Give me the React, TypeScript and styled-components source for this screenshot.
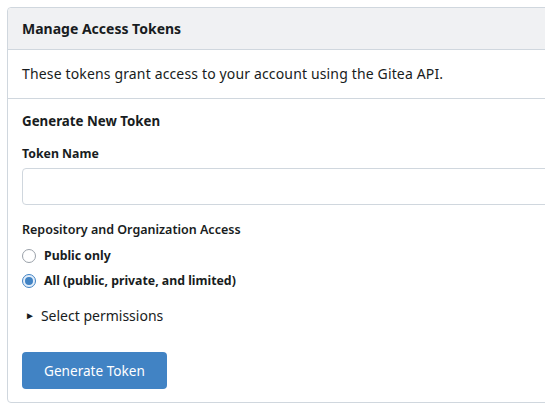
import React from 'react'
import styled, { createGlobalStyle } from 'styled-components'

const GlobalStyle = createGlobalStyle`
  html, body {
    margin: 0;
    padding: 0;
    background: #fff;
    overflow: hidden;
  }
  body {
    font-family: "Noto Sans", "Open Sans", sans-serif;
    color: #181c21;
    font-size: 14px;
  }
`

const Page = styled.div`
  padding: 7px 0 0 7px;
  width: 600px;
`

const Panel = styled.div`
  border: 1px solid #d0d7de;
  border-radius: 4px;
  background: #fff;
`

const Header = styled.h4`
  margin: 0;
  padding: 0 14px;
  height: 41px;
  display: flex;
  align-items: center;
  font-size: 14px;
  font-weight: 700;
  background: #f0f1f3;
  border-bottom: 1px solid #d0d7de;
  border-radius: 4px 4px 0 0;
`

const Segment = styled.div<{ $form?: boolean }>`
  padding: ${(p) => (p.$form ? '13px 14px 13px' : '14px')};
  border-bottom: 1px solid #d0d7de;
  &:last-child {
    border-bottom: none;
  }
`

const Desc = styled.p`
  margin: 0;
  line-height: 20px;
  letter-spacing: 0.15px;
`

const Form = styled.form`
  display: flex;
  flex-direction: column;
`

const FormTitle = styled.h5`
  margin: 0;
  font-size: 13.3px;
  font-weight: 700;
  line-height: 18px;
`

const Label = styled.label`
  display: block;
  font-size: 12.3px;
  font-weight: 700;
  line-height: 16px;
  margin: 16px 0 6px;
`

const TextInput = styled.input`
  box-sizing: border-box;
  width: 100%;
  height: 37px;
  border: 1px solid #d0d7de;
  border-radius: 4px;
  padding: 0 12px;
  font: inherit;
  outline: none;
`

const GroupLabel = styled.div`
  font-size: 12.5px;
  font-weight: 600;
  line-height: 16px;
  margin: 17px 0 5px;
`

const RadioRow = styled.label`
  display: flex;
  align-items: center;
  gap: 8px;
  height: 25px;
  font-size: 12.3px;
  font-weight: 700;
  cursor: pointer;
`

const RadioDot = styled.span<{ $checked?: boolean }>`
  box-sizing: border-box;
  width: 14px;
  height: 14px;
  border-radius: 50%;
  border: 1px solid ${(p) => (p.$checked ? '#4183c4' : '#9aa1a9')};
  background: ${(p) => (p.$checked ? '#e3eefa' : '#fff')};
  display: flex;
  align-items: center;
  justify-content: center;
  &::after {
    content: '';
    display: ${(p) => (p.$checked ? 'block' : 'none')};
    width: 8px;
    height: 8px;
    border-radius: 50%;
    background: #4183c4;
  }
`

const Details = styled.div`
  display: flex;
  align-items: center;
  gap: 6px;
  margin-top: 12px;
  height: 20px;
  font-size: 14px;
`

const Caret = styled.span`
  margin-left: 3px;
  font-size: 10px;
  line-height: 1;
`

const Button = styled.button`
  align-self: flex-start;
  margin-top: 27px;
  height: 37px;
  padding: 0 22px;
  border: none;
  border-radius: 4px;
  background: #4183c4;
  color: #fff;
  font: inherit;
  font-size: 13.6px;
  cursor: pointer;
`

export default function App() {
  return (
    <Page>
      <GlobalStyle />
      <Panel>
        <Header>Manage Access Tokens</Header>
        <Segment>
          <Desc>These tokens grant access to your account using the Gitea API.</Desc>
        </Segment>
        <Segment $form>
          <Form onSubmit={(e) => e.preventDefault()}>
            <FormTitle>Generate New Token</FormTitle>
            <Label htmlFor="token-name">Token Name</Label>
            <TextInput id="token-name" />
            <GroupLabel>Repository and Organization Access</GroupLabel>
            <RadioRow>
              <RadioDot />
              Public only
            </RadioRow>
            <RadioRow>
              <RadioDot $checked />
              All (public, private, and limited)
            </RadioRow>
            <Details>
              <Caret>►</Caret>
              Select permissions
            </Details>
            <Button type="submit">Generate Token</Button>
          </Form>
        </Segment>
      </Panel>
    </Page>
  )
}
